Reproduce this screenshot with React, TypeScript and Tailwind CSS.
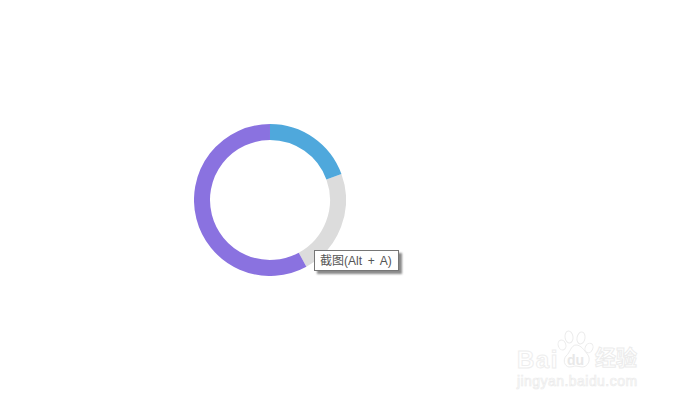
export default function App() {
  const cx = 76, r = 68;
  const pt = (deg: number) => {
    const a = (deg * Math.PI) / 180;
    return `${cx + r * Math.sin(a)} ${cx - r * Math.cos(a)}`;
  };
  const arc = (from: number, to: number) =>
    `M ${pt(from)} A ${r} ${r} 0 ${to - from > 180 ? 1 : 0} 1 ${pt(to)}`;
  return (
    <div className="relative w-[675px] h-[403px] bg-white overflow-hidden pl-[194px] pt-[124px]">
      <svg width="152" height="152" viewBox="0 0 152 152" className="block">
        <path d={arc(70, 151.4)} fill="none" stroke="#dcdcdc" strokeWidth="16" />
        <path d={arc(0, 70)} fill="none" stroke="#4fa8dc" strokeWidth="16" />
        <path d={arc(151.4, 359.99)} fill="none" stroke="#8a72e0" strokeWidth="16" />
      </svg>
      <div className="absolute left-[314px] top-[250px] w-[85px] h-[21px] border border-[#767676] bg-white shadow-[3px_3px_2px_#8a8a8a] flex items-center pl-[5px] text-[12px] text-[#555555] whitespace-nowrap [word-spacing:2.4px] font-['Liberation_Sans','Noto_Sans_CJK_SC',sans-serif]">
        截图(Alt + A)
      </div>
      <div className="absolute left-[517px] top-[330px] w-[125px] h-[60px] font-['Liberation_Sans','Noto_Sans_CJK_SC',sans-serif]">
        <div className="absolute left-0 top-[17px] text-[24px] leading-[26px] font-bold text-white [-webkit-text-stroke:1px_#eeeeee] tracking-[1.5px]">Bai</div>
        <svg width="40" height="40" viewBox="0 0 40 40" className="absolute left-[40px] top-0" fill="white" stroke="#ececec" strokeWidth="1">
          <ellipse cx="12" cy="7" rx="4" ry="6" transform="rotate(-8 12 7)" />
          <ellipse cx="24" cy="8" rx="4" ry="6" transform="rotate(10 24 8)" />
          <ellipse cx="5" cy="15" rx="3.8" ry="5" transform="rotate(-20 5 15)" />
          <ellipse cx="32" cy="18" rx="3.8" ry="5" transform="rotate(25 32 18)" />
          <path d="M19 15c5 0 8 5 12 10 3 5 0 12-6 12-2 0-4-1-6-1s-4 1-7 1c-5-1-6-7-3-11 4-3 5-11 10-11z" />
        </svg>
        <div className="absolute left-[50px] top-[23px] text-[14px] leading-[14px] font-bold text-[#e8e8e8]">du</div>
        <div className="absolute left-[78px] top-[16px] text-[21px] leading-[24px] font-bold text-white [-webkit-text-stroke:1px_#ececec]">经验</div>
        <div className="absolute left-0 top-[43px] text-[14px] leading-[16px] text-white [-webkit-text-stroke:0.7px_#ebebeb] tracking-[0.45px] whitespace-nowrap">jingyan.baidu.com</div>
      </div>
    </div>
  );
}
